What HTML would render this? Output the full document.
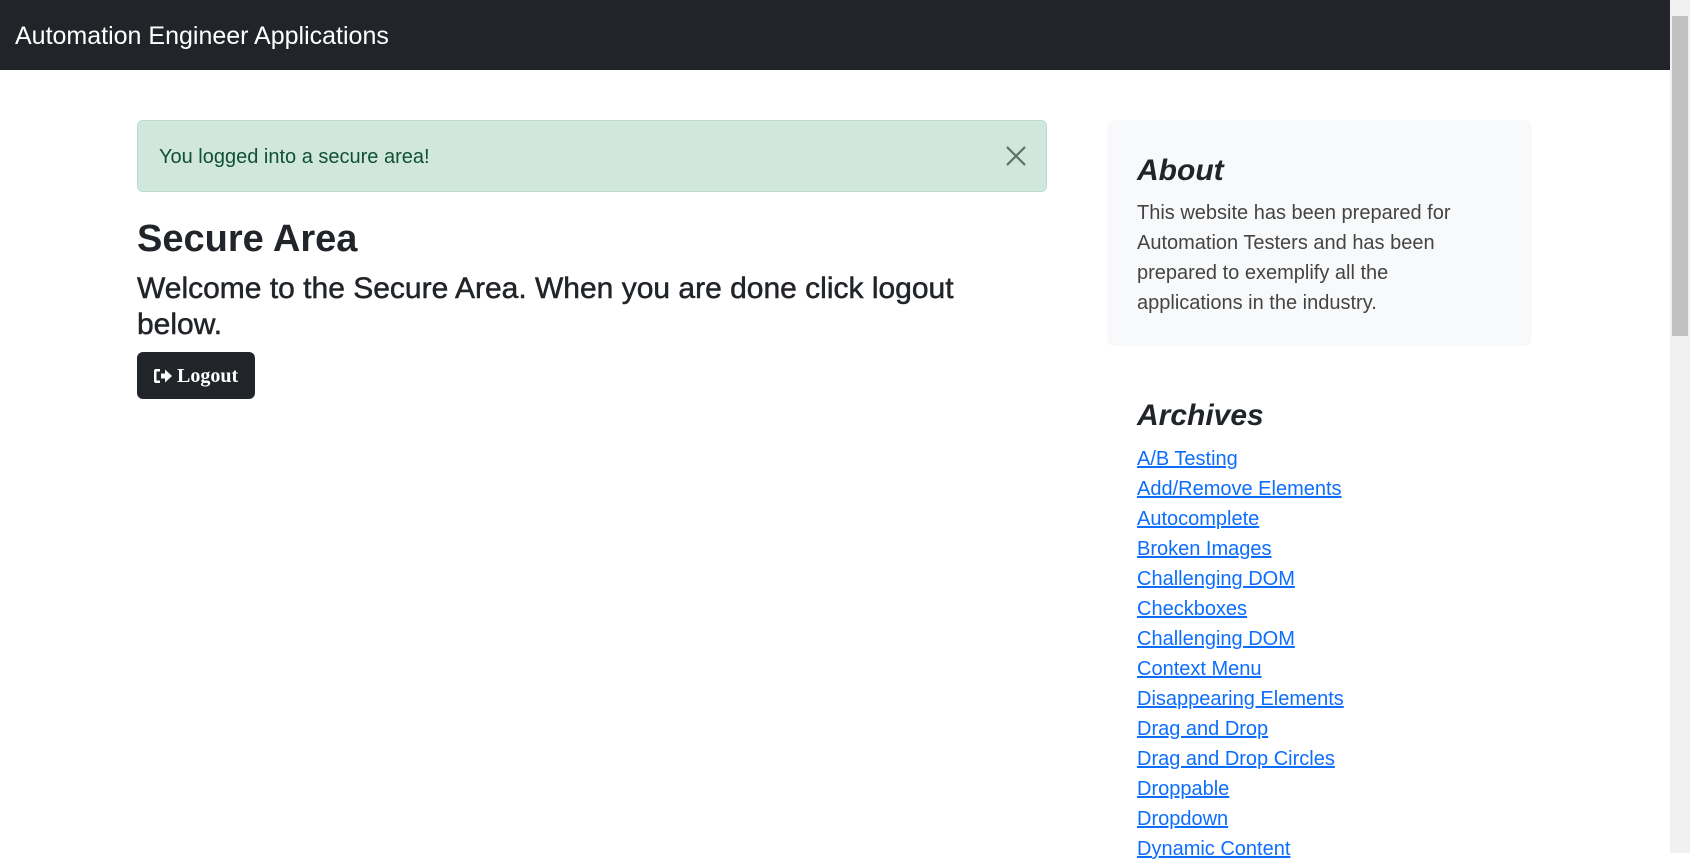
<!DOCTYPE html>
<html><head><meta charset="utf-8">
<style>
*{margin:0;padding:0;box-sizing:border-box}
html,body{width:1690px;height:853px;overflow:hidden;background:#fff;font-family:"Liberation Sans",sans-serif;color:#212529}
.nav{position:absolute;left:0;top:0;width:1670px;height:70px;background:#212529}
.brand{position:absolute;left:15px;top:21px;font-size:25px;color:#fff;line-height:30px}
.alert{position:absolute;left:137px;top:120px;width:910px;height:72px;background:#d1e7dd;border:1px solid #badbcc;border-radius:6px;color:#0f5132;font-size:20px}
.alert span{position:absolute;left:21px;top:24px;line-height:24px}
.x{position:absolute;left:867px;top:24px}
h2{position:absolute;left:137px;top:215px;font-size:38px;font-weight:bold;line-height:48px}
h4{position:absolute;left:137px;top:271px;width:880px;font-size:30px;font-weight:500;line-height:36px;-webkit-text-stroke:0.5px #212529}
.btn{position:absolute;left:137px;top:352px;width:118px;height:47px;background:#212529;border-radius:6px;color:#fff;font-family:"Liberation Serif",serif;font-weight:bold;font-size:20px}
.btn svg{position:absolute;left:16px;top:16px}
.btn span{position:absolute;left:40px;top:13px}
.about{position:absolute;left:1107px;top:120px;width:425px;height:226px;background:#f8f9fa;border-radius:8px}
.about h3,.arch h3{font-size:30px;font-style:italic;font-weight:bold;line-height:36px}
.about h3{position:absolute;left:30px;top:33px}
.about p{position:absolute;left:30px;top:78px;width:340px;font-size:20px;line-height:30px;color:#444}
.arch{position:absolute;left:1137px;top:398px}
.arch a{display:block;color:#0d6efd;text-decoration:underline;font-size:20px;line-height:30px}
.arch h3{margin-bottom:10px}
.sb{position:absolute;left:1670px;top:0;width:20px;height:853px;background:#f1f1f1}
.th{position:absolute;left:1672px;top:16px;width:16px;height:320px;background:#c1c1c1}
</style></head><body>
<div class="nav"><div class="brand">Automation Engineer Applications</div></div>
<div class="alert"><span>You logged into a secure area!</span>
<svg class="x" width="22" height="22" viewBox="0 0 22 22"><path d="M2 2L20 20M20 2L2 20" stroke="#5f6f68" stroke-width="2.2"/></svg></div>
<h2>Secure Area</h2>
<h4>Welcome to the Secure Area. When you are done click logout below.</h4>
<div class="btn"><svg width="20" height="16" viewBox="0 0 20 16"><path d="M7 1H3Q1 1 1 3V13Q1 15 3 15H7V12.5H3.5V3.5H7Z" fill="#fff"/><path d="M8 5.5H12V1.5L19 8L12 14.5V10.5H8Z" fill="#fff"/></svg><span>Logout</span></div>
<div class="about"><h3>About</h3><p>This website has been prepared for Automation Testers and has been prepared to exemplify all the applications in the industry.</p></div>
<div class="arch"><h3>Archives</h3>
<a>A/B Testing</a><a>Add/Remove Elements</a><a>Autocomplete</a><a>Broken Images</a><a>Challenging DOM</a><a>Checkboxes</a><a>Challenging DOM</a><a>Context Menu</a><a>Disappearing Elements</a><a>Drag and Drop</a><a>Drag and Drop Circles</a><a>Droppable</a><a>Dropdown</a><a>Dynamic Content</a></div>
<div class="sb"></div><div class="th"></div>
</body></html>
